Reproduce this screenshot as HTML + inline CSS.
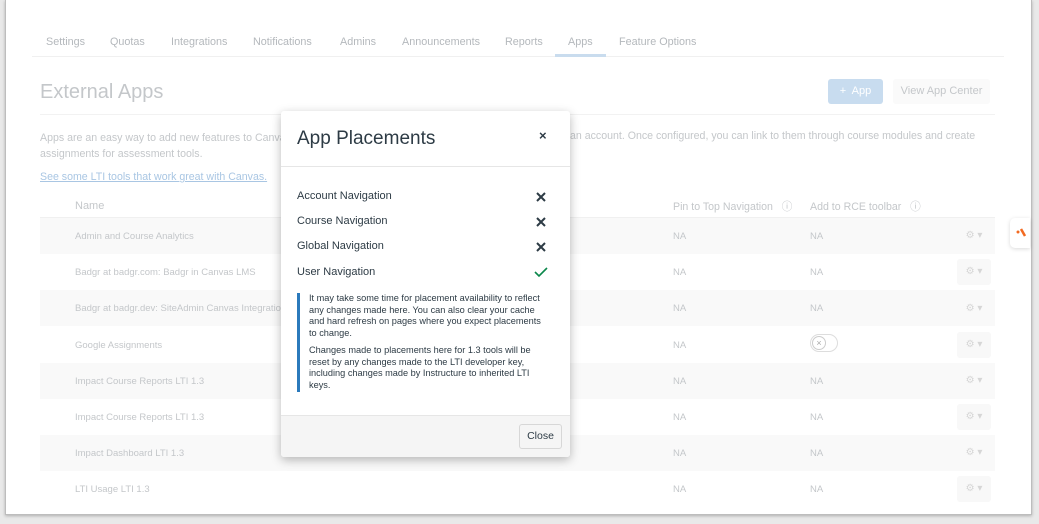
<!DOCTYPE html>
<html><head><meta charset="utf-8"><style>
*{box-sizing:border-box;margin:0;padding:0}
body{width:1039px;height:524px;background:#e9e9e9;font-family:"Liberation Sans",sans-serif;position:relative;overflow:hidden}
.frame{position:absolute;left:5px;top:0;width:1027px;height:515px;background:#fff;border:1px solid #bdbdbd;border-top:none;box-shadow:0 1px 3px rgba(0,0,0,.25)}
.abs{position:absolute;white-space:nowrap}
.tab{position:absolute;top:36px;font-size:10.8px;color:#b4b8bc}
.na{position:absolute;font-size:9.5px;color:#c4c7ca}
.nm{position:absolute;left:75px;font-size:9.5px;color:#c4c7ca}
.stripe{position:absolute;left:40px;width:955px;height:36px;background:#f9f9f9}
.gear{position:absolute;left:957px;width:34px;height:26px;border-radius:3px;font-size:10px;color:#d6d6d6;text-align:center;line-height:26px}
.gear.bg{background:#f8f8f8}
.modal{position:absolute;left:281px;top:111px;width:289px;height:346px;background:#fff;border-radius:3px;box-shadow:0 3px 10px rgba(0,0,0,.28)}
.row{position:absolute;left:16px;font-size:11px;color:#2d3b45}
.x{position:absolute;left:254px;width:12px;height:12px}
</style></head><body>
<div class="frame">
</div>
<div class="tab" style="left:46px">Settings</div>
<div class="tab" style="left:110px">Quotas</div>
<div class="tab" style="left:171px">Integrations</div>
<div class="tab" style="left:253px">Notifications</div>
<div class="tab" style="left:340px">Admins</div>
<div class="tab" style="left:402px">Announcements</div>
<div class="tab" style="left:505px">Reports</div>
<div class="tab" style="left:568px">Apps</div>
<div class="tab" style="left:619px">Feature Options</div>
<div class="abs" style="left:32px;top:56px;width:972px;height:1px;background:#f0f0f0"></div>
<div class="abs" style="left:555px;top:54px;width:51px;height:3px;background:#c9dcee"></div>
<div class="abs" style="left:40px;top:81px;font-size:20px;color:#c4c7ca">External Apps</div>
<div class="abs" style="left:40px;top:114px;width:955px;height:1px;background:#f2f2f2"></div>
<div class="abs" style="left:828px;top:79px;width:55px;height:25px;background:#c8dcef;border-radius:3px;color:#fff;font-size:11px;line-height:25px;text-align:center">+&nbsp; App</div>
<div class="abs" style="left:893px;top:79px;width:97px;height:25px;background:#fafafa;border-radius:3px;color:#c4c7ca;font-size:11px;line-height:25px;text-align:center">View App Center</div>
<div class="abs" style="left:40px;top:130px;font-size:10.6px;color:#c4c7ca;line-height:16px">Apps are an easy way to add new features to Canva<br>assignments for assessment tools.</div>
<div class="abs" style="left:570px;top:130px;font-size:10.6px;color:#c4c7ca">an account. Once configured, you can link to them through course modules and create</div>
<div class="abs" style="left:40px;top:171px;font-size:10.6px;color:#a9c6e3;text-decoration:underline">See some LTI tools that work great with Canvas.</div>
<div class="abs" style="left:75px;top:200px;font-size:11px;color:#c4c7ca">Name</div>
<div class="abs" style="left:673px;top:199px;font-size:10.6px;color:#c4c7ca">Pin to Top Navigation &nbsp;&nbsp;ⓘ</div>
<div class="abs" style="left:810px;top:199px;font-size:10.6px;color:#c4c7ca">Add to RCE toolbar &nbsp;&nbsp;ⓘ</div>
<div class="abs" style="left:40px;top:217px;width:955px;height:1px;background:#f0f0f0"></div>
<div class="stripe" style="top:218px"></div>
<div class="stripe" style="top:290px"></div>
<div class="stripe" style="top:363px"></div>
<div class="stripe" style="top:435px"></div>
<div class="nm" style="top:231px">Admin and Course Analytics</div>
<div class="nm" style="top:267px">Badgr at badgr.com: Badgr in Canvas LMS</div>
<div class="nm" style="top:303px">Badgr at badgr.dev: SiteAdmin Canvas Integration</div>
<div class="nm" style="top:340px">Google Assignments</div>
<div class="nm" style="top:376px">Impact Course Reports LTI 1.3</div>
<div class="nm" style="top:412px">Impact Course Reports LTI 1.3</div>
<div class="nm" style="top:448px">Impact Dashboard LTI 1.3</div>
<div class="nm" style="top:484px">LTI Usage LTI 1.3</div>
<div class="na" style="left:673px;top:231px">NA</div><div class="na" style="left:810px;top:231px">NA</div>
<div class="na" style="left:673px;top:267px">NA</div><div class="na" style="left:810px;top:267px">NA</div>
<div class="na" style="left:673px;top:303px">NA</div><div class="na" style="left:810px;top:303px">NA</div>
<div class="na" style="left:673px;top:340px">NA</div>
<div class="abs" style="left:810px;top:334px;width:28px;height:18px;border:1px solid #ddd;border-radius:9px"><div style="position:absolute;left:1px;top:1px;width:14px;height:14px;border:1px solid #ccc;border-radius:50%;font-size:9px;color:#aaa;text-align:center;line-height:12px">×</div></div>
<div class="na" style="left:673px;top:376px">NA</div><div class="na" style="left:810px;top:376px">NA</div>
<div class="na" style="left:673px;top:412px">NA</div><div class="na" style="left:810px;top:412px">NA</div>
<div class="na" style="left:673px;top:448px">NA</div><div class="na" style="left:810px;top:448px">NA</div>
<div class="na" style="left:673px;top:484px">NA</div><div class="na" style="left:810px;top:484px">NA</div>
<div class="gear" style="top:223px">⚙ ▾</div>
<div class="gear bg" style="top:259px">⚙ ▾</div>
<div class="gear" style="top:296px">⚙ ▾</div>
<div class="gear bg" style="top:332px">⚙ ▾</div>
<div class="gear" style="top:368px">⚙ ▾</div>
<div class="gear bg" style="top:404px">⚙ ▾</div>
<div class="gear" style="top:440px">⚙ ▾</div>
<div class="gear bg" style="top:476px">⚙ ▾</div>
<div class="abs" style="left:1010px;top:218px;width:20px;height:30px;background:#fff;border-radius:5px 0 0 5px;box-shadow:0 1px 4px rgba(0,0,0,.15)">
<svg width="20" height="30"><circle cx="8" cy="14" r="1.5" fill="#f26a21"/><path d="M11 11 L15 18" stroke="#f26a21" stroke-width="2.5"/></svg></div>

<div class="modal">
<div class="abs" style="left:16px;top:17px;font-size:19px;color:#2d3b45">App Placements</div>
<div class="abs" style="left:258px;top:17px;font-size:13px;color:#2d3b45;font-weight:bold">×</div>
<div class="abs" style="left:0;top:55px;width:289px;height:1px;background:#e6e6e6"></div>
<div class="row" style="top:79px">Account Navigation</div>
<div class="row" style="top:104px">Course Navigation</div>
<div class="row" style="top:129px">Global Navigation</div>
<div class="row" style="top:155px">User Navigation</div>
<svg class="x" style="top:80px" viewBox="0 0 12 12"><path d="M2 2L10 10M10 2L2 10" stroke="#2d3b45" stroke-width="2"/></svg>
<svg class="x" style="top:105px" viewBox="0 0 12 12"><path d="M2 2L10 10M10 2L2 10" stroke="#2d3b45" stroke-width="2"/></svg>
<svg class="x" style="top:130px" viewBox="0 0 12 12"><path d="M2 2L10 10M10 2L2 10" stroke="#2d3b45" stroke-width="2"/></svg>
<svg class="x" style="top:155px;width:14px;left:253px" viewBox="0 0 14 12"><path d="M1 6L5 10L13 2" stroke="#0b874b" stroke-width="1.6" fill="none"/></svg>
<div class="abs" style="left:16px;top:182px;width:3px;height:99px;background:#2b7abc"></div>
<div class="abs" style="left:28px;top:182px;width:238px;white-space:normal;font-size:9.2px;color:#2d3b45;line-height:11.7px">It may take some time for placement availability to reflect any changes made here. You can also clear your cache and hard refresh on pages where you expect placements to change.<div style="margin-top:5px">Changes made to placements here for 1.3 tools will be reset by any changes made to the LTI developer key, including changes made by Instructure to inherited LTI keys.</div></div>
<div class="abs" style="left:0;top:304px;width:289px;height:42px;background:#f5f5f5;border-top:1px solid #e6e6e6;border-radius:0 0 3px 3px"></div>
<div class="abs" style="left:238px;top:313px;width:43px;height:25px;background:#f5f5f5;border:1px solid #d7d7d7;border-radius:3px;font-size:10.5px;color:#2d3b45;text-align:center;line-height:23px">Close</div>
</div>
</body></html>
